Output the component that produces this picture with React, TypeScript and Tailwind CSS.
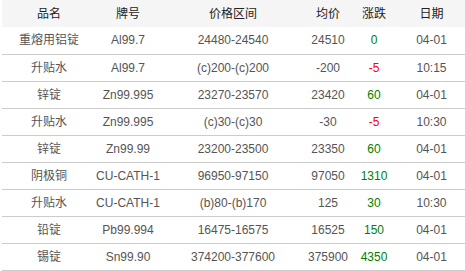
const rows = [
  { name: "重熔用铝锭", brand: "Al99.7", range: "24480-24540", avg: "24510", chg: "0", date: "04-01" },
  { name: "升贴水", brand: "Al99.7", range: "(c)200-(c)200", avg: "-200", chg: "-5", date: "10:15" },
  { name: "锌锭", brand: "Zn99.995", range: "23270-23570", avg: "23420", chg: "60", date: "04-01" },
  { name: "升贴水", brand: "Zn99.995", range: "(c)30-(c)30", avg: "-30", chg: "-5", date: "10:30" },
  { name: "锌锭", brand: "Zn99.99", range: "23200-23500", avg: "23350", chg: "60", date: "04-01" },
  { name: "阴极铜", brand: "CU-CATH-1", range: "96950-97150", avg: "97050", chg: "1310", date: "04-01" },
  { name: "升贴水", brand: "CU-CATH-1", range: "(b)80-(b)170", avg: "125", chg: "30", date: "10:30" },
  { name: "铅锭", brand: "Pb99.994", range: "16475-16575", avg: "16525", chg: "150", date: "04-01" },
  { name: "锡锭", brand: "Sn99.90", range: "374200-377600", avg: "375900", chg: "4350", date: "04-01" },
];

function chgColor(v: string) {
  if (v.startsWith("-")) return "text-[#ff0000]";
  return "text-[#008000]";
}

export default function App() {
  return (
    <div className="w-[465px] h-[271px] bg-white pl-[2px] overflow-hidden font-['Liberation_Sans','Noto_Sans_CJK_SC',sans-serif] text-[12px]">
      <table className="w-[463px] border-collapse table-fixed">
        <colgroup>
          <col className="w-[94px]" />
          <col className="w-[64px]" />
          <col className="w-[146px]" />
          <col className="w-[44px]" />
          <col className="w-[48px]" />
          <col className="w-[67px]" />
        </colgroup>
        <thead>
          <tr className="bg-[#f5f5f5] h-[27px] text-[#222]">
            <th className="font-normal text-center p-0">品名</th>
            <th className="font-normal text-center p-0">牌号</th>
            <th className="font-normal text-center p-0">价格区间</th>
            <th className="font-normal text-center p-0">均价</th>
            <th className="font-normal text-center p-0">涨跌</th>
            <th className="font-normal text-center p-0">日期</th>
          </tr>
        </thead>
        <tbody>
          {rows.map((r, i) => (
            <tr key={i} className="h-[27px] border-b border-[#cccccc] text-[#555555]">
              <td className="text-center p-0">{r.name}</td>
              <td className="text-center p-0">{r.brand}</td>
              <td className="text-center p-0">{r.range}</td>
              <td className="text-center p-0">{r.avg}</td>
              <td className={`text-center p-0 ${chgColor(r.chg)}`}>{r.chg}</td>
              <td className="text-center p-0">{r.date}</td>
            </tr>
          ))}
        </tbody>
      </table>
    </div>
  );
}
